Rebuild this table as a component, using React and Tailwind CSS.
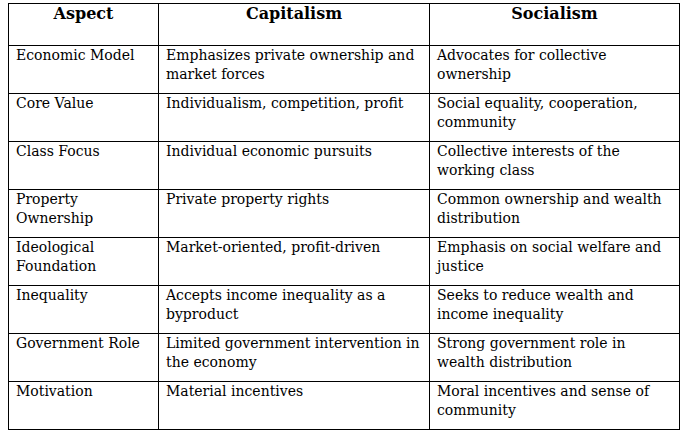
import React from "react";

const rows = [
  ["Economic Model", ["Emphasizes private ownership and", "market forces"], ["Advocates for collective", "ownership"]],
  ["Core Value", ["Individualism, competition, profit"], ["Social equality, cooperation,", "community"]],
  ["Class Focus", ["Individual economic pursuits"], ["Collective interests of the", "working class"]],
  [["Property", "Ownership"], ["Private property rights"], ["Common ownership and wealth", "distribution"]],
  [["Ideological", "Foundation"], ["Market-oriented, profit-driven"], ["Emphasis on social welfare and", "justice"]],
  ["Inequality", ["Accepts income inequality as a", "byproduct"], ["Seeks to reduce wealth and", "income inequality"]],
  ["Government Role", ["Limited government intervention in", "the economy"], ["Strong government role in", "wealth distribution"]],
  ["Motivation", ["Material incentives"], ["Moral incentives and sense of", "community"]],
];

function Lines({ v }) {
  const arr = Array.isArray(v) ? v : [v];
  return arr.map((l, i) => (
    <div key={i} className="whitespace-nowrap">{l}</div>
  ));
}

export default function App() {
  return (
    <div className="w-[684px] h-[435px] bg-white pt-[3px] pl-[8px] text-black" style={{ fontFamily: '"DejaVu Serif", serif' }}>
      <div className="grid grid-cols-[150px_271px_250px] w-[672px] border-l border-t border-black text-[14px] leading-[19px]">
        {["Aspect", "Capitalism", "Socialism"].map((h) => (
          <div key={h} className="h-[42px] border-r border-b border-black text-center font-bold text-[16px] leading-[20px]">{h}</div>
        ))}
        {rows.map((r, i) => (
          <React.Fragment key={i}>
            {r.map((c, j) => (
              <div key={j} className="h-[48px] border-r border-b border-black pl-[7px] pt-0">
                <Lines v={c} />
              </div>
            ))}
          </React.Fragment>
        ))}
      </div>
    </div>
  );
}
